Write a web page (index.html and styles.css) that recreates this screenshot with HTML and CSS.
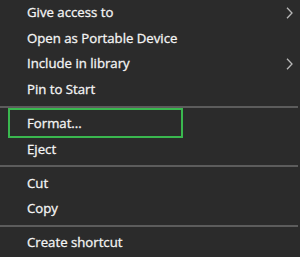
FILE: index.html
```html
<!DOCTYPE html>
<html>
<head>
<meta charset="utf-8">
<link rel="stylesheet" href="styles.css">
</head>
<body>
<div class="menu">
  <div class="item"><span class="label">Give access to</span><span class="arrow"><svg width="7" height="12" viewBox="0 0 7 12"><path d="M1 0.8 L6 6 L1 11.2" fill="none" stroke="#b8b8b8" stroke-width="1.3"/></svg></span></div>
  <div class="item"><span class="label">Open as Portable Device</span></div>
  <div class="item"><span class="label">Include in library</span><span class="arrow"><svg width="7" height="12" viewBox="0 0 7 12"><path d="M1 0.8 L6 6 L1 11.2" fill="none" stroke="#b8b8b8" stroke-width="1.3"/></svg></span></div>
  <div class="item"><span class="label">Pin to Start</span></div>
  <div class="sep"></div>
  <div class="item highlight"><span class="label">Format...</span><span class="box"></span></div>
  <div class="item"><span class="label">Eject</span></div>
  <div class="sep"></div>
  <div class="item"><span class="label">Cut</span></div>
  <div class="item"><span class="label">Copy</span></div>
  <div class="sep"></div>
  <div class="item"><span class="label">Create shortcut</span></div>
</div>
</body>
</html>
```
FILE: styles.css
```css
html, body {
  margin: 0;
  padding: 0;
  background: #2b2b2b;
  width: 300px;
  height: 257px;
  overflow: hidden;
}
.menu {
  display: flex;
  flex-direction: column;
  font-family: "Open Sans", "Noto Sans", sans-serif;
  font-size: 13.2px;
  color: #f4f4f4;
  -webkit-text-stroke: 0.3px #f4f4f4;
}
.item {
  position: relative;
  height: 25.6px;
  display: flex;
  align-items: center;
  padding-left: 27px;
  padding-right: 4px;
}
.label {
  flex: 1;
  white-space: nowrap;
  line-height: 1;
}
.arrow {
  display: flex;
  width: 7px;
  height: 12px;
  margin-right: 3px;
}
.sep {
  height: 8.4px;
  display: flex;
  align-items: center;
}
.sep::after {
  content: "";
  display: block;
  width: 298px;
  height: 2px;
  background: #5c5c5c;
}
.box {
  position: absolute;
  left: 8px;
  top: -3px;
  width: 171px;
  height: 26px;
  border: 2px solid #3ab84f;
}
```
